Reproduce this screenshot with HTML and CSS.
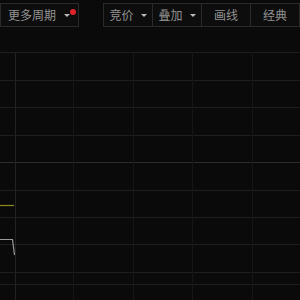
FILE: index.html
```html
<!DOCTYPE html>
<html lang="zh">
  <head>
    <meta charset="UTF-8" />
    <title>分时图</title>
    <link rel="stylesheet" href="styles.css">
  </head>
  <body>
    <!-- toolbar -->
    <div class="toolbar">
      <div class="tb-btn period">
        <span>更多周期</span>
        <span class="caret"></span>
        <span class="dot"></span>
      </div>
      <div class="tb-group">
        <div class="tb-btn"><span>竞价</span><span class="caret"></span></div>
        <div class="tb-btn"><span>叠加</span><span class="caret"></span></div>
        <div class="tb-btn plain">画线</div>
        <div class="tb-btn plain">经典</div>
      </div>
    </div>

    <!-- chart -->
    <div class="chart">
      <svg width="300" height="270" viewBox="0 30 300 270">
        <g stroke="#1f1f1f" stroke-width="1">
          <line x1="0" y1="52.5" x2="300" y2="52.5" />
          <line x1="0" y1="80.5" x2="300" y2="80.5" />
          <line x1="0" y1="107.5" x2="300" y2="107.5" />
          <line x1="0" y1="135.5" x2="300" y2="135.5" />
          <line x1="0" y1="190.5" x2="300" y2="190.5" />
          <line x1="0" y1="217.5" x2="300" y2="217.5" />
          <line x1="0" y1="244.5" x2="300" y2="244.5" />
          <line x1="0" y1="272.5" x2="300" y2="272.5" />
          <line x1="0" y1="284.5" x2="300" y2="284.5" />
        </g>
        <line x1="0" y1="162.5" x2="300" y2="162.5" stroke="#2c2c2c" />
        <g stroke="#161616" stroke-width="1">
          <line x1="73.5" y1="52" x2="73.5" y2="300" />
          <line x1="133.5" y1="52" x2="133.5" y2="300" />
          <line x1="192.5" y1="52" x2="192.5" y2="300" />
          <line x1="252.5" y1="52" x2="252.5" y2="300" />
        </g>
        <line x1="15.5" y1="52" x2="15.5" y2="300" stroke="#222" />
        <polyline points="0,205.5 14,205.5" fill="none" stroke="#8c8a1c" stroke-width="1.2" />
        <polyline points="0,239.5 12.5,239.5 14.5,255" fill="none" stroke="#9a9a9a" stroke-width="1.2" />
      </svg>
    </div>
  </body>
</html>
```

FILE: styles.css
```css
body {
  margin: 0;
  width: 300px;
  height: 300px;
  overflow: hidden;
  background-color: #0a0a0a;
  font-family: "Noto Sans CJK SC", sans-serif;
  font-size: 12px;
  color: #939393;
}

.toolbar {
  display: flex;
  align-items: center;
  height: 30px;
  padding-bottom: 1px;
  box-sizing: border-box;
}

.tb-group {
  display: flex;
  margin-left: 24px;
}

.tb-btn {
  display: flex;
  align-items: center;
  justify-content: center;
  gap: 7px;
  height: 24px;
  box-sizing: border-box;
  border: 1px solid #2a2a2a;
  background-color: #0d0d0d;
  width: 50px;
  position: relative;
}

.tb-group .tb-btn + .tb-btn {
  margin-left: -1px;
}

.tb-btn.period {
  width: 79px;
  justify-content: flex-start;
  padding-left: 7px;
  gap: 8px;
}

.caret {
  width: 0;
  height: 0;
  border-left: 3px solid transparent;
  border-right: 3px solid transparent;
  border-top: 3px solid #bbb;
  margin-top: 1px;
}

.dot {
  position: absolute;
  left: 69px;
  top: 5px;
  width: 6px;
  height: 6px;
  border-radius: 50%;
  background-color: #e0242c;
}

.chart svg {
  display: block;
}
```
